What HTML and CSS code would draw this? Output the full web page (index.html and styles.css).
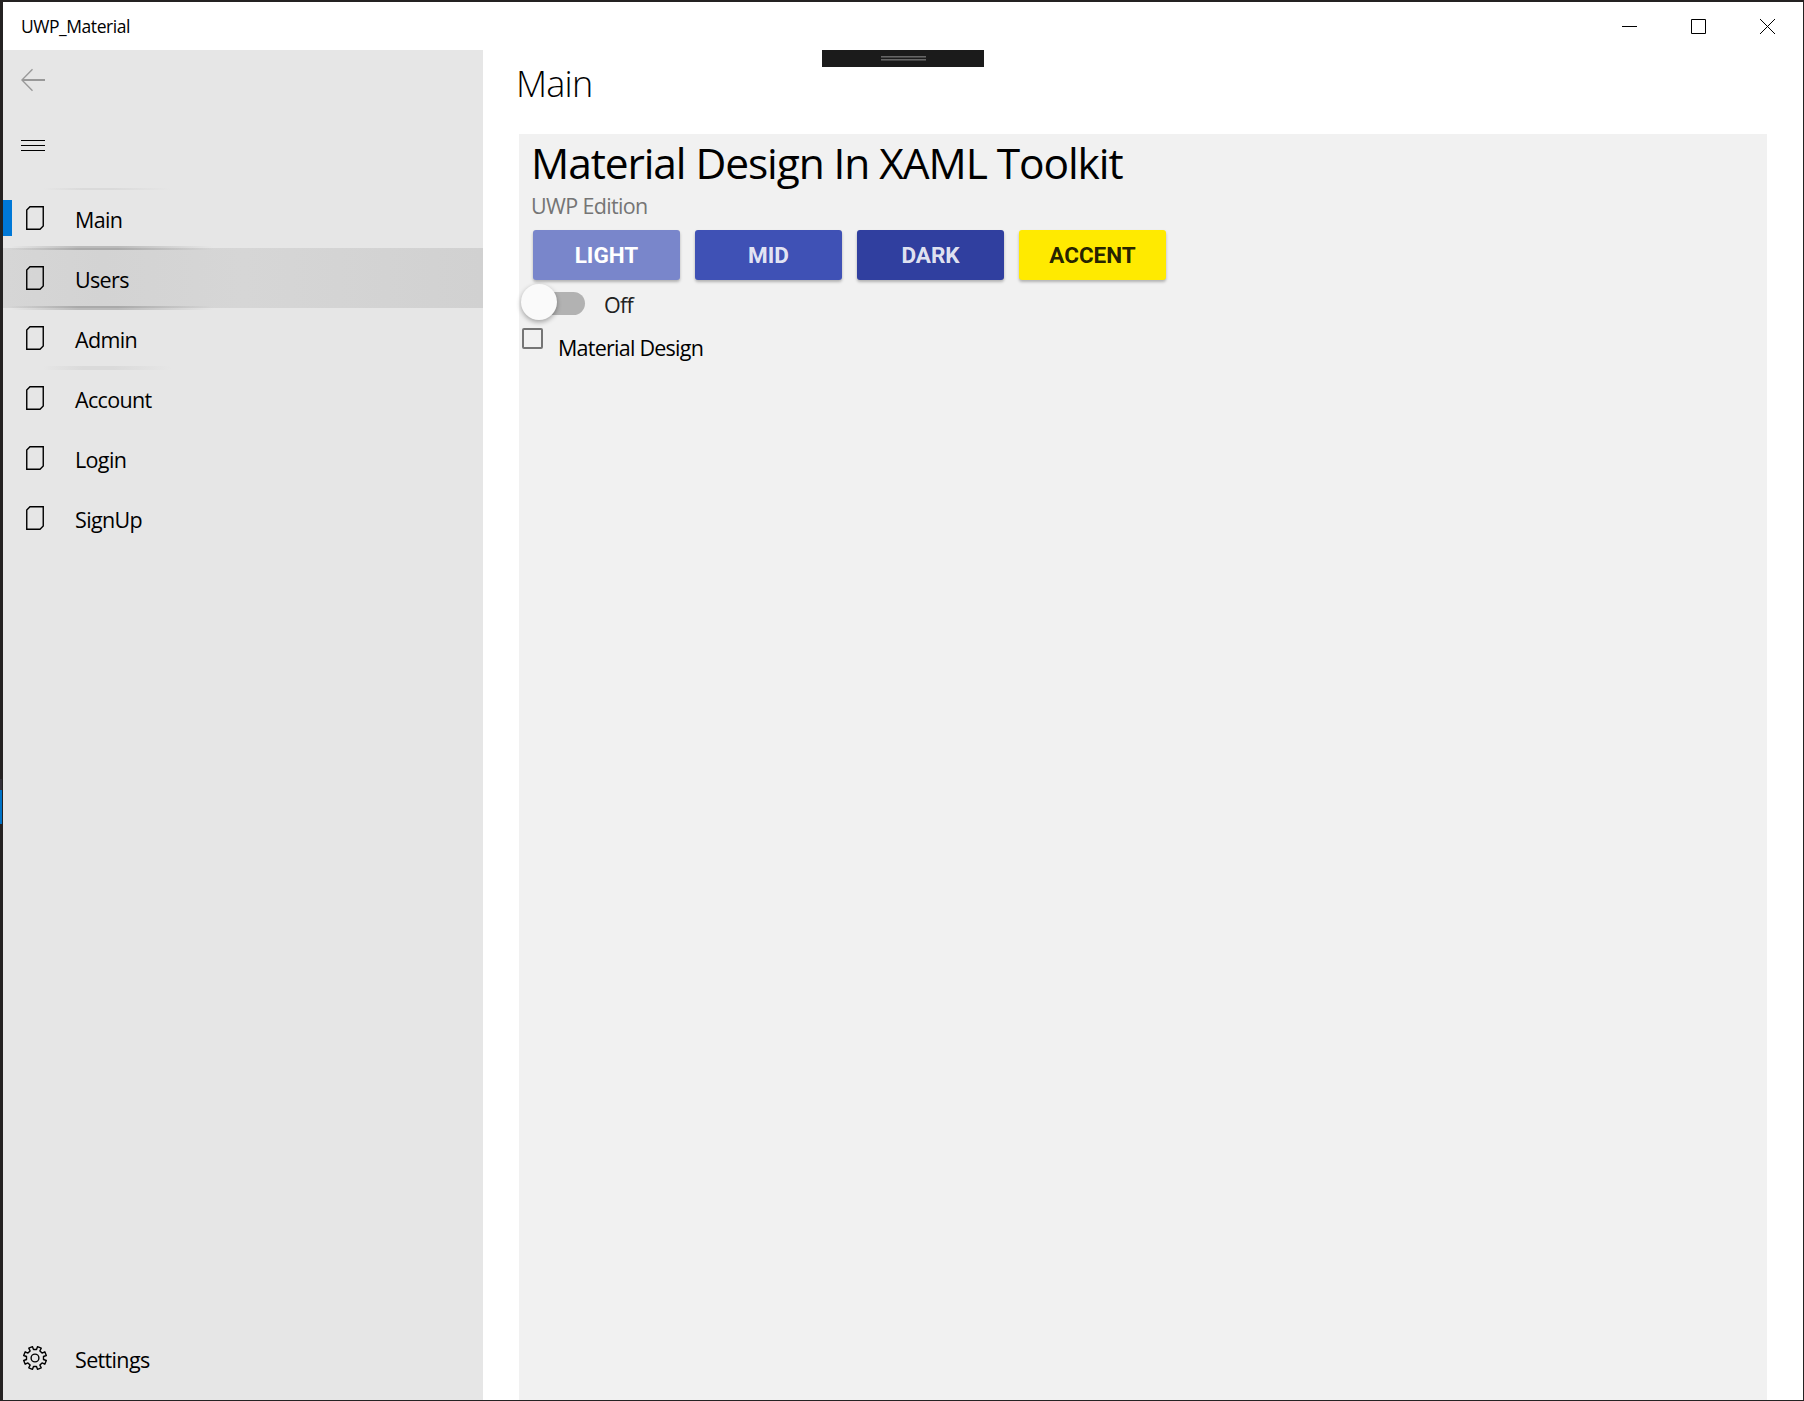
FILE: index.html
```html
<!DOCTYPE html>
<html lang="en">
<head>
<meta charset="utf-8">
<title>UWP_Material</title>
<link rel="stylesheet" href="styles.css">
</head>
<body>
<svg class="defs" width="0" height="0"><symbol id="page" viewBox="0 0 18 24"><path d="M4 .75H17.25V20L14 23.25H.75V4z" fill="none" stroke="#000" stroke-width="1.4"/></symbol></svg>
<div class="window">
  <header class="titlebar">
    <span class="app-name">UWP_Material</span>
    <div class="caption">
      <svg viewBox="0 0 69 48"><path d="M30 24.5h15" /></svg>
      <svg viewBox="0 0 69 48"><path d="M30.5 17.5h14v14h-14z" /></svg>
      <svg viewBox="0 0 69 48"><path d="M30 17l15 15M45 17L30 32" /></svg>
    </div>
  </header>
  <div class="body">
    <nav class="sidebar">
      <svg class="back" width="24" height="24" viewBox="0 0 24 24"><path d="M24 12H1" stroke-width="2"/><path d="M11.5 1.2L.9 12l10.6 10.8" stroke-width="1.4"/></svg>
      <svg class="burger" width="24" height="11" viewBox="0 0 24 11"><path d="M0 .5h24M0 5.5h24M0 10.5h24"/></svg>
      <ul class="menu">
        <li class="item above selected"><svg><use href="#page"/></svg><span>Main</span></li>
        <li class="item hovered"><svg><use href="#page"/></svg><span>Users</span></li>
        <li class="item below"><svg><use href="#page"/></svg><span>Admin</span></li>
        <li class="item after"><svg><use href="#page"/></svg><span>Account</span></li>
        <li class="item"><svg><use href="#page"/></svg><span>Login</span></li>
        <li class="item"><svg><use href="#page"/></svg><span>SignUp</span></li>
      </ul>
      <div class="item settings">
        <svg class="gear" viewBox="-12 -12 24 24"><path d="M-1.5-8.5L-2.5-11.3L-6.2-9.8L-4.9-7.1L-7.1-4.9L-9.8-6.2L-11.3-2.5L-8.5-1.5V1.5L-11.3 2.5L-9.8 6.2L-7.1 4.9L-4.9 7.1L-6.2 9.8L-2.5 11.3L-1.5 8.5H1.5L2.5 11.3L6.2 9.8L4.9 7.1L7.1 4.9L9.8 6.2L11.3 2.5L8.5 1.5V-1.5L11.3-2.5L9.8-6.2L7.1-4.9L4.9-7.1L6.2-9.8L2.5-11.3L1.5-8.5z"/><circle r="3.9"/></svg>
        <span>Settings</span>
      </div>
    </nav>
    <main class="content">
      <h1 class="page-title">Main</h1>
      <section class="panel">
        <h2 class="headline">Material Design In XAML Toolkit</h2>
        <p class="subtitle">UWP Edition</p>
        <div class="buttons">
          <button class="btn light">LIGHT</button>
          <button class="btn mid">MID</button>
          <button class="btn dark">DARK</button>
          <button class="btn accent">ACCENT</button>
        </div>
        <div class="toggle"><span class="track"><span class="thumb"></span></span><span class="state">Off</span></div>
        <label class="check"><span class="box"></span><span class="check-label">Material Design</span></label>
      </section>
    </main>
  </div>
  <div class="debug-bar"><i></i><i></i></div>
</div>
<div class="edge"></div>
</body>
</html>
```
FILE: styles.css
```css
* { box-sizing: border-box; }
body {
  margin: 0;
  height: 1401px;
  padding: 2px 1px 1px 3px;
  background: #242222;
  font-family: "Open Sans", "Noto Sans", sans-serif;
  color: #000;
  overflow: hidden;
}
.defs { position: absolute; }
.window { position: relative; height: 1398px; background: #fff; display: flex; flex-direction: column; }
.titlebar { height: 48px; display: flex; justify-content: space-between; }
.app-name { padding-left: 18px; line-height: 49px; font-size: 17.5px; letter-spacing: -.45px; }
.caption { display: flex; padding-right: 4px; }
.caption svg { width: 69px; height: 48px; fill: none; stroke: #000; stroke-width: 1; }
.body { flex: 1; display: flex; }
.sidebar { width: 480px; background: #e6e6e6; display: flex; flex-direction: column; }
.back { margin: 18px 0 0 18px; fill: none; stroke: #999; }
.burger { margin: 48px 0 0 18px; stroke: #000; fill: none; }
.menu { list-style: none; margin: 37px 0 0; padding: 0; }
.item { height: 60px; display: flex; align-items: center; font-size: 21.5px; letter-spacing: -.65px; background-repeat: no-repeat; }
.item svg { width: 18px; height: 24px; margin-left: 23px; }
.item span { margin-left: 31px; padding-top: 3px; line-height: 57px; }
.above {
  background-image: linear-gradient(90deg, #dadada00 40px, #dadada 80px, #dadada 110px, #dadada00 168px), linear-gradient(90deg, #bbb0 8px, #bbb 75px, #bbb 115px, #bbb0 210px);
  background-size: 100% 2px;
  background-position: top, bottom;
}
.selected::before { content: ""; width: 9px; height: 36px; background: #0078d7; margin-right: -9px; }
.hovered {
  background-color: #d4d4d4;
  background-image: linear-gradient(90deg, #aaa0 5px, #aaa 75px, #aaa 115px, #aaa0 210px), linear-gradient(90deg, #aaa0 5px, #aaa 75px, #aaa 115px, #aaa0 210px), linear-gradient(90deg, #d6d6d6, #d3d3d3 100px, #d6d6d6 240px, #d1d1d1);
  background-size: 100% 2px, 100% 2px, 100% 100%;
  background-position: top, bottom, center;
}
.below {
  background-image: linear-gradient(90deg, #bbb0 8px, #bbb 75px, #bbb 115px, #bbb0 210px), linear-gradient(90deg, #dadada00 40px, #dadada 80px, #dadada 110px, #dadada00 168px);
  background-size: 100% 2px;
  background-position: top, bottom;
}
.after {
  background-image: linear-gradient(90deg, #dadada00 40px, #dadada 80px, #dadada 110px, #dadada00 168px);
  background-size: 100% 2px;
}
.settings { margin-top: auto; margin-bottom: 12px; }
.item .gear { width: 24px; margin-left: 20px; fill: none; stroke: #000; stroke-width: 1.4; stroke-linejoin: round; }
.gear + span { margin-left: 28px; }
.content { flex: 1; padding: 0 36px 0 36px; display: flex; flex-direction: column; }
.page-title { margin: 0 0 0 -3px; height: 84px; font: 300 36px/68px "Open Sans", "Noto Sans", sans-serif; letter-spacing: -.8px; }
.panel { flex: 1; background: #f1f1f1; }
.headline { margin: 0 0 0 12px; height: 60px; font-weight: 400; font-size: 42.5px; line-height: 58px; letter-spacing: -1.1px; white-space: nowrap; }
.subtitle { margin: 0 0 0 12px; height: 36px; font-size: 21.5px; line-height: 23px; letter-spacing: -.65px; color: #757575; }
.buttons { display: flex; gap: 15px; padding-left: 14px; }
.btn { width: 147px; height: 50px; border: 0; border-radius: 3px; padding: 0; font: 700 22.5px/50px Roboto, sans-serif; box-shadow: 0 2px 3px #0004; color: #ffffffde; }
.light { background: #7986cb; color: #fff; }
.mid { background: #3f51b5; }
.dark { background: #303f9f; }
.accent { background: #ffea00; color: #000000de; }
.toggle { display: flex; height: 48px; padding: 12px 0 0 12px; }
.track { position: relative; width: 54px; height: 23px; border-radius: 12px; background: #b2b2b2; }
.thumb { position: absolute; left: -10px; top: -8px; width: 36px; height: 36px; border-radius: 50%; background: #fafafa; box-shadow: 0 2px 5px #0005; }
.state { margin-left: 19px; font-size: 21.5px; line-height: 26px; letter-spacing: -.7px; color: #212121; }
.check { display: flex; padding-left: 3px; }
.box { width: 21px; height: 21px; border: 2px solid #757575; border-radius: 2px; }
.check-label { margin-left: 15px; font-size: 21.5px; line-height: 40px; letter-spacing: -.75px; }
.debug-bar { position: absolute; left: 819px; top: 48px; width: 162px; height: 17px; background: #1b1b1b; display: flex; flex-direction: column; align-items: center; gap: 1px; padding-top: 6px; }
.debug-bar i { width: 45px; height: 2px; background: #666; border-bottom: 1px solid #444; }
.edge { position: absolute; left: 0; top: 779px; width: 2px; height: 45px; border-top: 11px solid #33313a; background: #0072c6; }
```
